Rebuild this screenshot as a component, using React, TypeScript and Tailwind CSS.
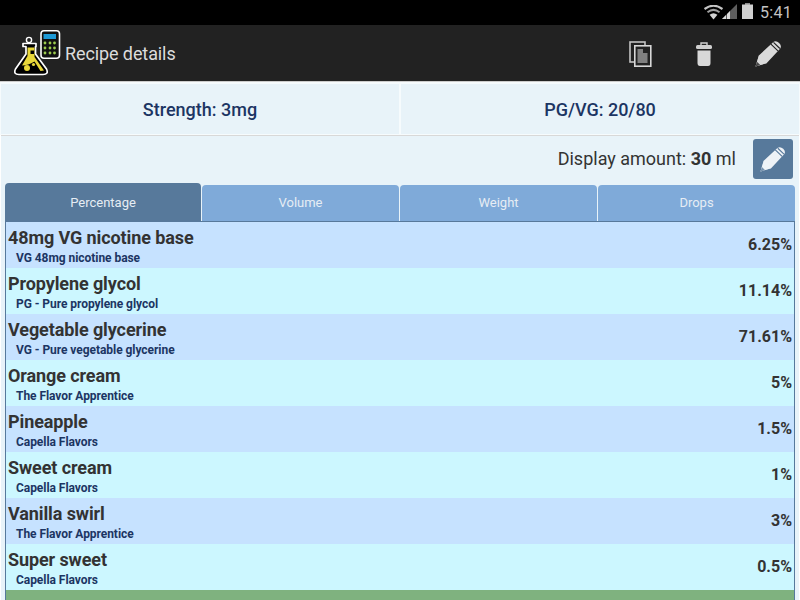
import { Fragment } from 'react';

const rows = [
  { name: '48mg VG nicotine base', sub: 'VG 48mg nicotine base', value: '6.25%' },
  { name: 'Propylene glycol', sub: 'PG - Pure propylene glycol', value: '11.14%' },
  { name: 'Vegetable glycerine', sub: 'VG - Pure vegetable glycerine', value: '71.61%' },
  { name: 'Orange cream', sub: 'The Flavor Apprentice', value: '5%' },
  { name: 'Pineapple', sub: 'Capella Flavors', value: '1.5%' },
  { name: 'Sweet cream', sub: 'Capella Flavors', value: '1%' },
  { name: 'Vanilla swirl', sub: 'The Flavor Apprentice', value: '3%' },
  { name: 'Super sweet', sub: 'Capella Flavors', value: '0.5%' },
];

const tabs = ['Volume', 'Weight', 'Drops'];

const AppLogo = () => (
  <svg width="48" height="50" viewBox="0 0 48 50">
    <rect x="27" y="2.8" width="18.5" height="27.5" rx="3" fill="#111" stroke="#fff" strokeWidth="1.6" />
    <rect x="29.5" y="6" width="12.5" height="5" fill="#1e9ad6" />
    <g fill="#9ccb4e">
      {[15, 20, 25].map((y) => (
        <Fragment key={y}>
          <circle cx="31" cy={y} r="1.4" />
          <circle cx="36" cy={y} r="1.4" />
          <circle cx="40.5" cy={y} r="1.4" />
        </Fragment>
      ))}
    </g>
    <circle cx="15" cy="12" r="2.6" fill="none" stroke="#fff" strokeWidth="1.4" />
    <path d="M9 15.5 H22 V18.5 H21.5 V26 L32.5 41 Q35 46.5 29 46.5 H5 Q-1 46.5 1.5 41 L12 26 V18.5 H9 Z" fill="#000" stroke="#fff" strokeWidth="1.7" strokeLinejoin="round" />
    <path d="M13.5 19.5 H20.5 V29 L30 42.5 L26.5 43 L20.5 33.5 Q14 37.5 8 37.5 L13.5 28 Z" fill="#e8d73a" />
    <circle cx="13" cy="40" r="3" fill="#e8d73a" />
    <circle cx="19.5" cy="36.5" r="1.6" fill="#e8d73a" />
    <rect x="16.5" y="22.5" width="3.5" height="3.5" fill="#000" />
  </svg>
);

const Pencil = ({ size, color, stripe }: { size: number; color: string; stripe: string }) => (
  <svg width={size} height={size} viewBox="0 0 28 28">
    <path d="M0.5 27.5 L4 16 L18.5 2.5 Q21.5 0 25 3 Q28.5 6.5 25.5 9.5 L12 24 Z" fill={color} />
    <path d="M4 16 Q9 17 12 24 L0.5 27.5 Z" fill={color} opacity="0.72" />
    <path d="M0.5 27.5 L2 22.5 L5.5 26 Z" fill={stripe} opacity="0.8" />
    <path d="M16.5 4.2 L23.8 11.2 M19.2 2.4 L25.8 8.8" stroke={stripe} strokeWidth="1.2" />
  </svg>
);

export default function App() {
  return (
    <div className="w-[800px] h-[600px] overflow-hidden flex flex-col bg-white font-['Roboto',sans-serif]">
      {/* status bar */}
      <div className="h-[25px] shrink-0 bg-black flex items-center justify-end pr-[8px]">
        <svg width="19" height="15" viewBox="0 0 19 15" className="mt-[-1px]">
          <path d="M0.5 4 Q9.5 -2.5 18.5 4" stroke="#c4c4c4" strokeWidth="2.2" fill="none" />
          <path d="M3.5 7.2 Q9.5 2.6 15.5 7.2" stroke="#a0a0a0" strokeWidth="2" fill="none" />
          <path d="M9.5 14.5 L5.6 9.8 Q9.5 6.8 13.4 9.8 Z" fill="#d4d4d4" />
        </svg>
        <svg width="15" height="15" viewBox="0 0 15 15" className="ml-[-1px] mt-[-2px]">
          <path d="M0 15 L15 0 V15 Z" fill="#5e5e5e" />
          <path d="M0 15 L4 11 V15 Z M5 15 V10 L8 7 V15 Z" fill="#dcdcdc" />
        </svg>
        <svg width="11" height="16" viewBox="0 0 11 16" className="ml-[5px] mt-[-3px]">
          <rect x="3" y="0" width="5" height="2" fill="#8a8a8a" />
          <rect x="0" y="1.5" width="11" height="14.5" fill="#d0d0d0" />
        </svg>
        <span className="ml-[7px] text-[16px] leading-none text-[#c4c4c4] tracking-[0.3px]">5:41</span>
      </div>

      {/* action bar */}
      <div className="h-[56px] shrink-0 bg-[#222222] flex items-center pl-[14px]">
        <AppLogo />
        <span className="ml-[3px] text-[18px] tracking-[-0.1px] text-[#dcdcdc]">Recipe details</span>
        <div className="ml-auto flex items-center">
          <div className="w-[64px] flex justify-center pl-[1px] mt-[2px]">
            <svg width="23" height="26" viewBox="0 0 23 26">
              <rect x="1" y="1" width="15" height="20" fill="none" stroke="#c4c4c4" strokeWidth="1.6" />
              <rect x="5.8" y="4.8" width="16" height="20.4" fill="#222" stroke="#d8d8d8" strokeWidth="1.6" />
              <path d="M8.5 8 H14 V12 H18.5 V22 H8.5 Z" fill="#808080" />
            </svg>
          </div>
          <div className="w-[64px] flex justify-center mt-[1px]">
            <svg width="16" height="24" viewBox="0 0 16 24">
              <path d="M5 3 V1 H11 V3" fill="none" stroke="#cfcfcf" strokeWidth="1.4" />
              <rect x="0" y="3" width="16" height="4" rx="1.5" fill="#cfcfcf" />
              <path d="M1.5 8.5 H14.5 V21 Q14.5 24 12 24 H4 Q1.5 24 1.5 21 Z" fill="#d8d8d8" />
            </svg>
          </div>
          <div className="w-[64px] flex justify-center mt-[1px]">
            <Pencil size={27} color="#dadada" stripe="#222222" />
          </div>
        </div>
      </div>

      {/* summary */}
      <div className="h-[54px] shrink-0 flex bg-[#f6fbfd] pt-[2px] border-t border-[#cccccc]">
        <div className="flex-1 h-[50px] ml-[1px] bg-[#e8f3f9] flex items-center justify-center text-[18px] font-medium text-[#1c3563]">
          Strength: 3mg
        </div>
        <div className="flex-1 h-[50px] ml-[2px] mr-[1px] bg-[#e8f3f9] flex items-center justify-center text-[18px] font-medium text-[#1c3563]">
          PG/VG: 20/80
        </div>
      </div>

      {/* details panel */}
      <div className="flex-1 mx-[1px] bg-[#e8f3f9] border-t border-[#d8d8d8] px-[4px] flex flex-col">
        <div className="h-[47px] shrink-0 flex items-center justify-end pr-[2px]">
          <span className="text-[18px] text-[#333333] mt-[-2px]">
            Display amount: <span className="font-bold">30</span> ml
          </span>
          <div className="ml-[17px] mt-[-1px] w-[40px] h-[40px] rounded-[3px] bg-[#57799b] flex items-center justify-center">
            <Pencil size={26} color="#eef2f6" stripe="#57799b" />
          </div>
        </div>

        {/* tabs */}
        <div className="h-[38px] shrink-0 flex items-end gap-[1px]">
          <div className="w-[196px] h-[38px] pt-[2px] rounded-t-[4px] bg-[#57799b] flex items-center justify-center text-[13px] text-[#e6edf4]">
            Percentage
          </div>
          {tabs.map((tab) => (
            <div key={tab} className="flex-1 h-[36px] rounded-t-[4px] bg-[#7faad9] flex items-center justify-center text-[13px] text-[#e6edf4]">
              {tab}
            </div>
          ))}
        </div>

        {/* ingredients */}
        <div className="flex-1 border-x border-t border-[#57799b]">
          {rows.map((row, i) => (
            <div key={row.name} className={`h-[46px] flex items-center justify-between pl-[2px] pr-[2px] ${i % 2 === 0 ? 'bg-[#c6e2ff]' : 'bg-[#ccf7ff]'}`}>
              <div className="flex flex-col pt-[2px]">
                <span className="text-[18px] leading-[24px] tracking-[-0.1px] font-bold text-[#333333]">{row.name}</span>
                <span className="ml-[8px] text-[12px] leading-[16px] tracking-[-0.05px] font-bold text-[#1c3563]">{row.sub}</span>
              </div>
              <span className="text-[16px] font-bold text-[#333333]">{row.value}</span>
            </div>
          ))}
          <div className="h-[10px] bg-[#7fb27f]" />
        </div>
      </div>
    </div>
  );
}
